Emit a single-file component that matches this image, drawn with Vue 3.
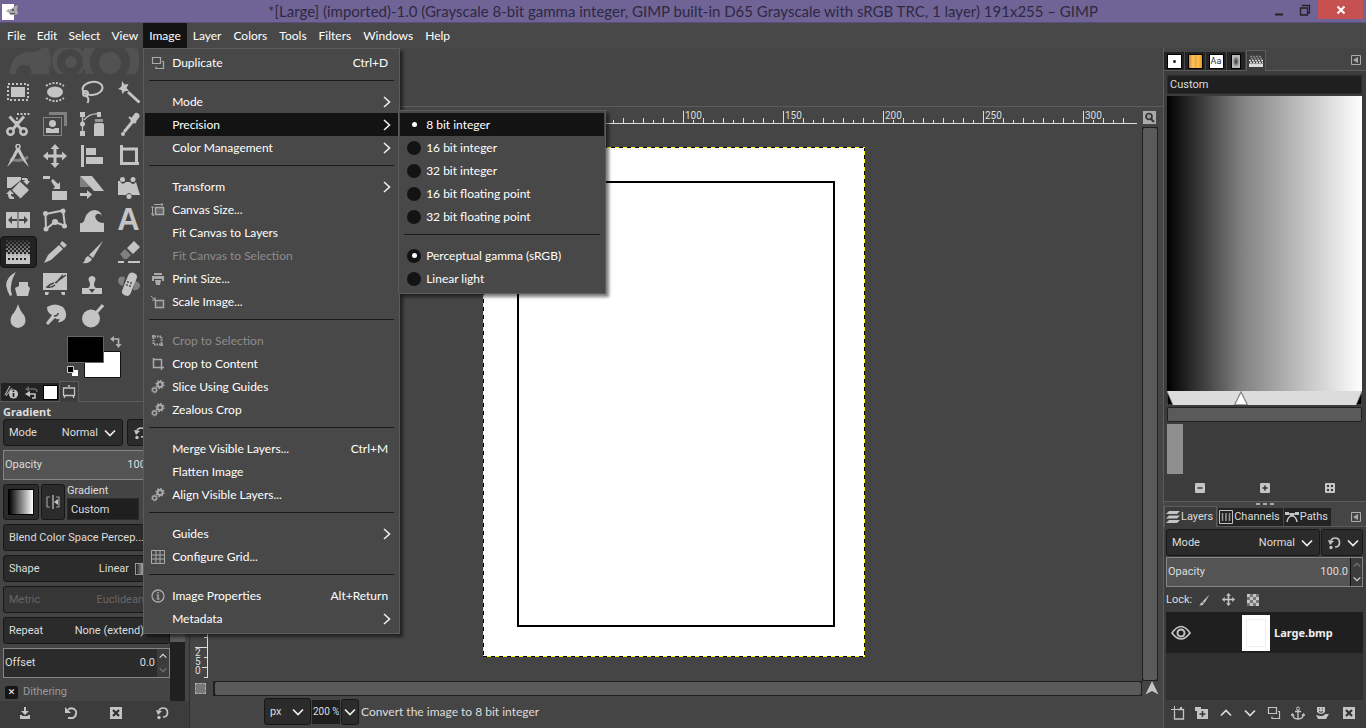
<script setup>
import { ref } from 'vue'

const menus = ['File', 'Edit', 'Select', 'View', 'Image', 'Layer', 'Colors', 'Tools', 'Filters', 'Windows', 'Help']

const imageMenu = [
  { label: 'Duplicate', icon: 'duplicate', key: 'Ctrl+D' },
  { sep: true },
  { label: 'Mode', sub: true },
  { label: 'Precision', sub: true, open: true },
  { label: 'Color Management', sub: true },
  { sep: true },
  { label: 'Transform', sub: true },
  { label: 'Canvas Size...', icon: 'canvas' },
  { label: 'Fit Canvas to Layers' },
  { label: 'Fit Canvas to Selection', off: true },
  { label: 'Print Size...', icon: 'print' },
  { label: 'Scale Image...', icon: 'scaleimg' },
  { sep: true },
  { label: 'Crop to Selection', icon: 'cropsel', off: true },
  { label: 'Crop to Content', icon: 'cropc' },
  { label: 'Slice Using Guides', icon: 'gears' },
  { label: 'Zealous Crop', icon: 'gears' },
  { sep: true },
  { label: 'Merge Visible Layers...', key: 'Ctrl+M' },
  { label: 'Flatten Image' },
  { label: 'Align Visible Layers...', icon: 'gears' },
  { sep: true },
  { label: 'Guides', sub: true },
  { label: 'Configure Grid...', icon: 'grid' },
  { sep: true },
  { label: 'Image Properties', icon: 'info', key: 'Alt+Return' },
  { label: 'Metadata', sub: true },
]

const precisions = ['8 bit integer', '16 bit integer', '32 bit integer', '16 bit floating point', '32 bit floating point']
const gammas = ['Perceptual gamma (sRGB)', 'Linear light']
const precision = ref(precisions[0])
const gamma = ref(gammas[0])
const dithering = ref(true)

const tools = [
  'rect', 'ellipse', 'lasso', 'wand', 'scissors', 'fgselect', 'paths', 'picker',
  'measure', 'move', 'align', 'crop', 'unified', 'scale', 'shear', 'handle',
  'flip', 'cage', 'warp', 'text', 'gradient', 'pencil', 'brush', 'eraser',
  'ink', 'mypaint', 'stamp', 'heal', 'drop', 'smudge', 'dodge',
]

// Ruler marks every 5 image pixels; labels under the open menus are left out.
const ticks = []
for (let i = -27; i <= 64; i++) {
  ticks.push({ pos: i * 10, len: i % 10 === 0 ? 12 : i % 2 === 0 ? 5 : 3, label: i % 10 === 0 && i >= 20 ? String(i * 5) : '' })
}
const vticks = ticks
  .filter(t => t.pos > -20 && t.pos < 531)
  .map(t => ({ ...t, label: t.pos >= 500 ? t.label : '' }))

const checks = []
for (let row = 0; row < 10; row++) {
  for (let col = 0; col < 12; col++) {
    if ((row + col) % 2 === 0) checks.push({ x: col * 2, y: row * 2, o: 0.15 + row * 0.1 })
  }
}
</script>

<template>
  <div class="app">
    <svg class="defs" aria-hidden="true">
      <defs>
        <symbol id="rect" viewBox="0 0 24 24"><rect x="2" y="4" width="20" height="16" fill="none" stroke="currentColor" stroke-width="2" stroke-dasharray="2 2" /><path fill="currentColor" d="M5 7h14v10H5z" /></symbol>
        <symbol id="ellipse" viewBox="0 0 24 24"><ellipse cx="12" cy="12" rx="8" ry="5.500" fill="currentColor" /><path d="M3 6Q12 0 21 6M3 18Q12 24 21 18" fill="none" stroke="currentColor" stroke-width="2" stroke-dasharray="2 1.500" /></symbol>
        <symbol id="lasso" viewBox="0 0 24 24"><g fill="none" stroke="currentColor" stroke-width="2"><ellipse cx="12.500" cy="8.500" rx="10" ry="6.500" transform="rotate(-8 12 8)" /><circle cx="5.500" cy="13.500" r="2.500" /><path d="M6 16Q10 18 7.500 23" /></g></symbol>
        <symbol id="wand" viewBox="0 0 24 24"><path fill="currentColor" d="M5 1l2.500 3.500 4-.5-2 4 2.500 3-4 0-2.500 3-1-4-3.500-1 3.500-2.500z" /><path d="M11 12l11.500 10.500" stroke="currentColor" stroke-width="3" /></symbol>
        <symbol id="scissors" viewBox="0 0 24 24"><g fill="none" stroke="currentColor"><g stroke-width="2.500"><circle cx="4.500" cy="19.500" r="3.200" /><circle cx="17.500" cy="19.500" r="3.200" /><path d="M3.500 4.500L15 17M18 4.500L7 17" stroke-width="3" /></g><path d="M11 2h13M11 5.500v6" stroke-width="2" stroke-dasharray="2 1.500" /></g></symbol>
        <symbol id="fgselect" viewBox="0 0 24 24"><path d="M6 1.500h16.500V14" fill="none" stroke="#808080" stroke-width="3" /><rect x=".5" y="5.500" width="18" height="18" fill="none" stroke="currentColor" stroke-dasharray="1 1" /><circle cx="9.500" cy="11.500" r="3.500" fill="currentColor" /><path fill="currentColor" d="M3 21v-5h4q2.500 2 5 0h4v5z" /></symbol>
        <symbol id="paths" viewBox="0 0 24 24"><path fill="currentColor" d="M0 0h5v5H0zM0 19h5v5H0zM17 0h4v5h-4zM14 13q0-2 2-2h6q2 0 2 2v11H14z" /><circle cx="2.500" cy="12" r="2.500" fill="currentColor" /><path d="M2.500 3v18M4 8Q10 1 18 2" fill="none" stroke="currentColor" stroke-width="1.300" /><path fill="#999" d="M15 7h8v3h-8z" /></symbol>
        <symbol id="picker" viewBox="0 0 24 24"><path d="M7 20L17 8" stroke="currentColor" stroke-width="3" /><path d="M16.500 8l3-4" stroke="currentColor" stroke-width="6" stroke-linecap="round" /><path d="M12 5l7 6" stroke="currentColor" stroke-width="2" /><circle cx="6" cy="22" r="2" fill="currentColor" /></symbol>
        <symbol id="measure" viewBox="0 0 24 24"><path d="M4 15q9 4 18-2" fill="none" stroke="#808080" stroke-width="3" /><circle cx="12" cy="2.500" r="2" fill="none" stroke="currentColor" stroke-width="1.500" /><path fill="currentColor" d="M10 5L1 23q6-5 11-15 5 10 11 15L14 5z" /></symbol>
        <symbol id="move" viewBox="0 0 24 24"><path fill="currentColor" d="M12 0l4.500 5h-3v5.500H19v-3l5 4.500-5 4.500v-3h-5.500V19h3L12 24l-4.500-5h3v-5.500H5v3L0 12l5-4.500v3h5.500V5h-3z" /></symbol>
        <symbol id="align" viewBox="0 0 24 24"><path fill="currentColor" d="M1 1h3v22H1zM6 4h10v7H6zM6 13h17v7H6z" /></symbol>
        <symbol id="crop" viewBox="0 0 24 24"><path d="M4.500 4v15.500H19.500V5H4" fill="none" stroke="currentColor" stroke-width="3" /><path fill="currentColor" d="M3 1h3v3H3zM20 18h2v3h-2z" /></symbol>
        <symbol id="unified" viewBox="0 0 24 24"><path fill="currentColor" d="M1 1h14v3L5 12H1zM14 5.500l9 8.500-8.500 8.500L6 14zM16 2h4q2 0 2 3h2l-3 4-4-4h2q0-1-1-1h-2zM0 18l4-4 4 4H5q0 3 3 3v2H5q-3 0-3-5z" /></symbol>
        <symbol id="scale" viewBox="0 0 24 24"><path fill="currentColor" d="M0 0h7v3H0zM9 15h15v9H9zM8 5l2-2 5 5 2-2v7h-7l2-2z" /></symbol>
        <symbol id="shear" viewBox="0 0 24 24"><path fill="#808080" d="M0 0v11h10z" /><path fill="currentColor" d="M0 0h12l12 15H14zM0 17h7v-3l5 4.500-5 4.500v-3H0z" /></symbol>
        <symbol id="handle" viewBox="0 0 24 24"><path fill="currentColor" d="M1 5l2 0q2 5 6 1h4q3 4 6 0l4 13h-8q-3-4-6 0H1z" /><g fill="currentColor"><circle cx="5.500" cy="3.500" r="2.500" /><circle cx="16" cy="3.500" r="2.500" /><circle cx="12" cy="20.500" r="2.500" /></g></symbol>
        <symbol id="flip" viewBox="0 0 24 24"><path fill="currentColor" d="M0 4h11.500v16H0zM12.500 4H24v16H12.500z" /><path fill="#454545" d="M2 12l4-4v3h5v2H6v3zM22 12l-4-4v3h-5v2h5v3z" /></symbol>
        <symbol id="cage" viewBox="0 0 24 24"><path d="M2.500 6L20 2.500 22 18 12 14 3 21z" fill="none" stroke="currentColor" stroke-width="2" /><g fill="currentColor"><circle cx="2.500" cy="5.500" r="2.500" /><circle cx="20" cy="3" r="2.500" /><circle cx="21.500" cy="18" r="2.500" /><circle cx="12" cy="14" r="3" /><circle cx="3" cy="21" r="2.500" /></g></symbol>
        <symbol id="warp" viewBox="0 0 24 24"><path fill="currentColor" d="M0 24v-9q4 1 5-5Q8 2 15 2q6 1 7 6-2-3-5-2-3 2-1 5 2 4 8 4v9z" /></symbol>
        <symbol id="pencil" viewBox="0 0 24 24"><path fill="currentColor" d="M1 23l4-8L16 5l4 4L8 20zM17 4l2-3 5 4-3 3z" /></symbol>
        <symbol id="brush" viewBox="0 0 24 24"><path fill="currentColor" d="M23 1L13 18l-4-3zM8 16l4 3q-2 5-10 4 3-1 3-4 1-2 3-3z" /></symbol>
        <symbol id="eraser" viewBox="0 0 24 24"><path fill="currentColor" d="M10 8l7-7 6 6-7 7zM1 21h6v2H1zM11 21h12v2H11z" /><path fill="#808080" d="M3 14l5-5 6 6-4 4H7z" /></symbol>
        <symbol id="ink" viewBox="0 0 24 24"><path fill="currentColor" d="M10 0Q1 4 0 13q1 6 4 11l2-1q-2-5-1-9Q6 6 10 0zM13 10h9v4l2 2-2 8H11L9 16l4-2z" /></symbol>
        <symbol id="mypaint" viewBox="0 0 24 24"><path fill="currentColor" d="M0 1h24v17H0zM2 20h4l-1 3H2zM18 20h4v3h-3z" /><path d="M23 3L12 11M20 3l-7 8M11 11q-4 1-7 4 5 1 8-2" stroke="#454545" stroke-width="1.500" fill="none" /></symbol>
        <symbol id="stamp" viewBox="0 0 24 24"><path fill="currentColor" d="M2 22v-6h6q3-2 1.500-6-2-3 0-5 2.500-2 5 0 2 2 0 5-1.500 4 1.500 6h6v6z" /><path fill="#454545" d="M9 17h6l-3 4z" /></symbol>
        <symbol id="heal" viewBox="0 0 24 24"><path fill="#808080" d="M1 8q1-5 7-3l-2 9Q1 13 1 8zM16 18l2-9q5 1 5 5-1 5-7 4z" /><rect x="8" y="0" width="9" height="24" rx="4" transform="rotate(22 12 12)" fill="currentColor" /><g fill="#454545"><circle cx="11" cy="10" r=".9" /><circle cx="14" cy="11" r=".9" /><circle cx="10" cy="13" r=".9" /><circle cx="13" cy="14" r=".9" /></g></symbol>
        <symbol id="drop" viewBox="0 0 24 24"><path fill="currentColor" d="M12 0q2 7 6 11 3 6 0 10-6 6-12 0-3-4 0-10 4-4 6-11z" /></symbol>
        <symbol id="smudge" viewBox="0 0 24 24"><path fill="currentColor" d="M4 3q8-5 16 0 5 6 2 12-3 4-7 3l2-3q-3 1-5-1L5 21l-2-2 6-8q-5-2-5-8z" /><path d="M11 12q4 0 4-3" stroke="#454545" stroke-width="1.500" fill="none" /></symbol>
        <symbol id="dodge" viewBox="0 0 24 24"><circle cx="11" cy="14.500" r="9" fill="currentColor" /><path d="M16 9l7-8" stroke="currentColor" stroke-width="3" /></symbol>
        <symbol id="duplicate" viewBox="0 0 14 14"><path d="M1.500 1.500h8v6h-8zM5 10.500v2h7.500v-7H11" fill="none" stroke="currentColor" stroke-width="1.200" /></symbol>
        <symbol id="canvas" viewBox="0 0 14 14"><path d="M3 1.500h9M1.500 4v8M1.500 12.500H3" fill="none" stroke="currentColor" /><rect x="4.500" y="4.500" width="8" height="7" fill="#666" stroke="currentColor" stroke-width="1.500" /><path d="M11 0v3M0 11h3M0 4h3" stroke="currentColor" /></symbol>
        <symbol id="print" viewBox="0 0 14 14"><path fill="currentColor" d="M3 1h8v2H3zM1 4h12v5h-2V7H3v2H1zM4 8h6l-1 5H5z" /></symbol>
        <symbol id="scaleimg" viewBox="0 0 14 14"><path d="M0 1l4 4M4 2v3H1" stroke="currentColor" fill="none" /><rect x="4.500" y="5.500" width="8" height="7" fill="#555" stroke="currentColor" stroke-width="1.500" /></symbol>
        <symbol id="cropsel" viewBox="0 0 14 14"><path d="M2.500 1v9.500H12M1 2.500h9.500V13" fill="none" stroke="currentColor" stroke-width="2" stroke-dasharray="1.500 1" /></symbol>
        <symbol id="cropc" viewBox="0 0 14 14"><path d="M2.500 1v9.500H13M2 2.500h8.500V13" fill="none" stroke="currentColor" stroke-width="1.500" /></symbol>
        <symbol id="gears" viewBox="0 0 14 14"><g fill="none" stroke="currentColor"><circle cx="9" cy="4.500" r="2.500" stroke-width="2" /><circle cx="9" cy="4.500" r="4" stroke-width="1.300" stroke-dasharray="1.600 1.500" /><circle cx="3.500" cy="10" r="2" stroke-width="1.300" /><circle cx="3.500" cy="10" r="3" stroke-dasharray="1 1.300" /></g></symbol>
        <symbol id="grid" viewBox="0 0 14 14"><path d="M.5.500h13v13H.500zM.500 5h13M.500 9h13M5 .500v13M9 .500v13" fill="none" stroke="currentColor" /></symbol>
        <symbol id="info" viewBox="0 0 14 14"><circle cx="7" cy="7" r="6" fill="none" stroke="currentColor" stroke-width="1.300" /><path fill="currentColor" d="M6.300 3h1.500v1.500H6.300zM5.500 5.500h2.300v4h1v1h-3.300v-1h.8v-3h-.8z" /></symbol>
        <symbol id="right" viewBox="0 0 8 12"><path d="M1 1l5.500 5L1 11" fill="none" stroke="#eee" stroke-width="1.600" /></symbol>
        <symbol id="down" viewBox="0 0 12 12"><path d="M1 3.500l5 5 5-5" fill="none" stroke="#eee" stroke-width="1.700" /></symbol>
        <symbol id="up" viewBox="0 0 12 12"><path d="M1 8.500l5-5 5 5" fill="none" stroke="currentColor" stroke-width="1.700" /></symbol>
        <symbol id="reset" viewBox="0 0 14 14"><path d="M4 4.500Q5 2 8 2q4.500 0 4.500 4.500T8 11" fill="none" stroke="currentColor" stroke-width="1.700" /><path fill="currentColor" d="M1 4l6 1-4 4z" /><circle cx="4" cy="11.500" r="1.700" fill="currentColor" /></symbol>
        <symbol id="undo" viewBox="0 0 14 14"><path d="M4 3.500q5-3 8 1.500 1 5-3 7H4" fill="none" stroke="currentColor" stroke-width="1.800" /><path fill="currentColor" d="M1 1v6h6z" /></symbol>
        <symbol id="save" viewBox="0 0 14 14"><path fill="currentColor" d="M6 1h2v4h3L7 9 3 5h3zM2 9h2v1h6V9h2v4H2z" /></symbol>
        <symbol id="delete" viewBox="0 0 14 14"><path fill="currentColor" d="M1 1h12v12H1z" /><path d="M4 4l6 6M10 4l-6 6" stroke="#303030" stroke-width="2.200" /></symbol>
        <symbol id="collapse" viewBox="0 0 10 10"><path d="M.5.500h9v9h-9z" fill="none" stroke="currentColor" /><path fill="currentColor" d="M7 2v6L2 5z" /></symbol>
        <symbol id="halftone" viewBox="0 0 14 12"><path d="M1 1.500h12M2 3.500h12" stroke="#888" stroke-width="1.500" stroke-dasharray="2 1" /><path d="M0 5.500h14M1 7.500h13" stroke="currentColor" stroke-width="1.700" stroke-dasharray="2 1" /><path fill="currentColor" d="M0 8.500h14V12H0z" /></symbol>
        <symbol id="layers" viewBox="0 0 14 14"><path fill="currentColor" d="M3 1h11l-3 3H0zM3 5.500h11l-3 3H0zM3 10h11l-3 3H0z" /></symbol>
        <symbol id="channels" viewBox="0 0 14 14"><path d="M.5.500h13v13H.500z" fill="#222" stroke="currentColor" /><path d="M3.500 3v8M7 3v8M10.500 3v8" stroke="#999" stroke-width="1.500" /></symbol>
        <symbol id="pathtab" viewBox="0 0 14 12"><path fill="currentColor" d="M0 1h4v3H0zM10 1h4v3h-4zM5 2h4v3H5z" /><path d="M2 3h10M2 11q1-6 5-6t5 6" fill="none" stroke="currentColor" stroke-width="1.500" /></symbol>
        <symbol id="checker" viewBox="0 0 12 12"><path fill="#777" d="M0 0h12v12H0z" /><path fill="currentColor" d="M0 0h3v3H0zM6 0h3v3H6zM3 3h3v3H3zM9 3h3v3H9zM0 6h3v3H0zM6 6h3v3H6zM3 9h3v3H3zM9 9h3v3H9z" /></symbol>
        <symbol id="newlayer" viewBox="0 0 14 14"><path d="M3.500 6v7h9V3.500H7" fill="none" stroke="currentColor" stroke-width="1.300" /><path d="M3.500 0v7M0 3.500h7" stroke="currentColor" /><path fill="currentColor" d="M9 1h2v3H9z" /></symbol>
        <symbol id="group" viewBox="0 0 14 14"><path fill="currentColor" d="M0 1h6v2h7v10H2V5H0z" /><path d="M7.500 5v6M4.500 8h6" stroke="#383838" stroke-width="1.500" /></symbol>
        <symbol id="anchor" viewBox="0 0 14 14"><circle cx="7" cy="2.500" r="1.500" fill="none" stroke="currentColor" /><path d="M7 4v9M4 5.500h6M1.500 8q0 5 5.500 5t5.500-5M0 9.500L1.500 8 3 10M11 10l1.500-2L14 9.500" fill="none" stroke="currentColor" stroke-width="1.300" /></symbol>
        <symbol id="mask" viewBox="0 0 14 14"><path fill="currentColor" d="M2 1h8v5q-4 4-8 0zM1 9l4 1q4 0 5-2h4l-3 5H3z" /><path d="M4 3h1M7 3h1M4 5.500q2 1.500 4 0" stroke="#333" fill="none" /></symbol>
        <symbol id="toolopt" viewBox="0 0 14 14"><path d="M1.500 3h11v7.500h-11zM6 1h2M3 11l-1 2M11 11l1 2" fill="none" stroke="currentColor" stroke-width="1.300" /></symbol>
        <symbol id="device" viewBox="0 0 14 14"><path d="M1 10L6 1M2 11L8 3" stroke="#aaa" stroke-width="1.200" /><circle cx="9.500" cy="9" r="4.500" fill="currentColor" /><path d="M9.500 8v4M9.500 5.500v1.500" stroke="#222" stroke-width="1.700" /></symbol>
        <symbol id="history" viewBox="0 0 14 14"><path d="M3 4h7q3 0 3 3" fill="none" stroke="#666" stroke-width="1.500" /><path fill="#666" d="M5 1v6L1 4z" /><path d="M3 9h8v4H8" fill="none" stroke="currentColor" stroke-width="1.500" /><path fill="currentColor" d="M6 6v6L1 9z" /></symbol>
        <symbol id="eye" viewBox="0 0 20 16"><path d="M1 8Q10-5 19 8 10 20 1 8z" fill="none" stroke="currentColor" stroke-width="1.700" /><circle cx="10" cy="8" r="3.500" fill="none" stroke="currentColor" stroke-width="2" /></symbol>
        <symbol id="flipgrad" viewBox="0 0 14 14"><path d="M4 2H1v10h3M10 2h3v10h-3" fill="none" stroke="#999" stroke-width="1.200" /><path d="M7 0v14" stroke="#aaa" stroke-width="1.500" /><path fill="currentColor" d="M12 4v6L8 7z" /></symbol>
        <symbol id="swap" viewBox="0 0 12 12"><path d="M4 3h4.500v6" fill="none" stroke="currentColor" stroke-width="1.700" /><path fill="currentColor" d="M0 3l4-3v6zM5.500 8h6l-3 4z" /></symbol>
        <symbol id="zoomout" viewBox="0 0 10 10"><rect width="10" height="10" rx="1" fill="currentColor" /><path d="M2.500 5h5" stroke="#333" stroke-width="1.500" /></symbol>
        <symbol id="zoomin" viewBox="0 0 10 10"><rect width="10" height="10" rx="1" fill="currentColor" /><path d="M2.500 5h5M5 2.500v5" stroke="#333" stroke-width="1.500" /></symbol>
        <symbol id="zoomfit" viewBox="0 0 10 10"><rect width="10" height="10" rx="1" fill="currentColor" /><path fill="#333" d="M2 2h2v2H2zM6 2h2v2H6zM2 6h2v2H2zM6 6h2v2H6z" /></symbol>
      </defs>
    </svg>

    <header class="title">
      <svg class="wilber" viewBox="0 0 17 17" width="17" height="17"><path fill="#fff" d="M0 1h12v16H0z" /><path fill="#aaa" d="M4 8q2-2 5-2 3-3 7-4l-1 4 1 5-4 1q-4 1-5-2z" /><path fill="#555" d="M10 6h2v2h-2zM8 10h5v1H8z" /></svg>
      <h1>*[Large] (imported)-1.0 (Grayscale 8-bit gamma integer, GIMP built-in D65 Grayscale with sRGB TRC, 1 layer) 191x255 – GIMP</h1>
      <div class="winbtns">
        <button aria-label="Minimize"><svg viewBox="0 0 12 14" width="12" height="14"><path d="M2 11.500h8" stroke="#222" stroke-width="2" /></svg></button>
        <button aria-label="Restore"><svg viewBox="0 0 12 14" width="12" height="14"><path d="M1.500 5h7v7h-7zM3.500 3V2.500h7V10H9" fill="none" stroke="#222" stroke-width="1.300" /></svg></button>
        <button class="close" aria-label="Close"><svg viewBox="0 0 10 10" width="10" height="10"><path d="M1.500 1.500l7 7M8.500 1.500l-7 7" stroke="#fff" stroke-width="2" /></svg></button>
      </div>
    </header>

    <nav class="menubar">
      <div v-for="m in menus" :key="m" class="slot">
        <button :class="{ active: m === 'Image' }">{{ m }}</button>
        <div v-if="m === 'Image'" class="menu main-menu">
          <template v-for="(it, i) in imageMenu" :key="i">
            <hr v-if="it.sep">
            <div v-else class="slot">
              <button class="item" :class="{ hot: it.open }" :disabled="it.off">
                <svg v-if="it.icon" class="mi"><use :href="'#' + it.icon" /></svg><span v-else class="mi"></span>
                <span class="lbl">{{ it.label }}</span>
                <span v-if="it.key">{{ it.key }}</span>
                <svg v-if="it.sub" class="arr"><use href="#right" /></svg>
              </button>
              <div v-if="it.open" class="menu submenu">
                <label v-for="p in precisions" :key="p" class="item" :class="{ hot: p === precision }"><input v-model="precision" type="radio" name="precision" :value="p"><span>{{ p }}</span></label>
                <hr>
                <label v-for="g in gammas" :key="g" class="item"><input v-model="gamma" type="radio" name="gamma" :value="g"><span>{{ g }}</span></label>
              </div>
            </div>
          </template>
        </div>
      </div>
    </nav>

    <main class="work">
      <aside class="left">
        <svg class="banner" width="186" height="26" viewBox="0 0 186 26"><g fill="#525252"><path d="M9 26Q12 4 30 4q8 0 12-4h7v26H31q2-9-7-9-8 0-8 9z" /><circle cx="69" cy="13" r="20" /><circle cx="109" cy="14" r="26" /></g><path d="M51 0h38v26H51z" fill="#454545" /><g fill="#525252"><circle cx="69" cy="13" r="17" /></g><circle cx="70" cy="14" r="13" fill="#454545" /><circle cx="71" cy="14" r="6" fill="#525252" /><path d="M84 0q-4 12 2 26h50q6-14 1-26z" fill="#525252" /><circle cx="110" cy="14" r="20" fill="#454545" /><circle cx="110" cy="15" r="11" fill="#525252" /></svg>
        <div class="tools">
          <button v-for="t in tools" :key="t" :class="{ picked: t === 'gradient' }" :aria-label="t">
            <svg v-if="t === 'gradient'" viewBox="0 0 24 24" shape-rendering="crispEdges"><rect v-for="(c, i) in checks" :key="i" :x="c.x" :y="c.y" width="2" height="2" fill="#c4c4c4" :opacity="c.o" /><path d="M0 14h2v2h2v-2h2v2h2v-2h2v2h2v-2h2v2h2v-2h2v2h2v-2h2v2h2v8H0z" fill="#c4c4c4" /><path d="M2 18h2v2H2zM6 18h2v2H6zM10 18h2v2h-2zM14 18h2v2h-2zM18 18h2v2h-2z" fill="#222" /></svg>
            <span v-else-if="t === 'text'" class="glyph">A</span>
            <svg v-else><use :href="'#' + t" /></svg>
          </button>
        </div>
        <div class="colors">
          <svg width="56" height="44" viewBox="0 0 56 44"><path d="M17.500 15.500h36v26h-36z" fill="#fff" stroke="#111" /><path d="M.5.500h36v26H.500z" fill="#000" stroke="#666" /><path d="M5 34h6v6H5z" fill="#fff" /><path d="M.500 30.500h6v6h-6z" fill="#000" stroke="#ccc" /><svg x="43" y="0" width="12" height="12"><use href="#swap" /></svg></svg>
        </div>
        <div class="tabs ltabs">
          <button aria-label="Device status"><svg class="ic"><use href="#device" /></svg></button>
          <button aria-label="Undo history"><svg class="ic"><use href="#history" /></svg></button>
          <button class="slim" aria-label="Images"><i class="thumb"></i></button>
          <button class="on" aria-label="Tool options"><svg class="ic"><use href="#toolopt" /></svg></button>
        </div>
        <section class="options">
          <div class="optcol">
            <h2>Gradient</h2>
            <div class="row first">
              <label class="combo"><span>Mode</span><select><option>Normal</option></select><svg class="ch"><use href="#down" /></svg></label>
              <button class="combo" aria-label="Reset mode"><svg class="ic"><use href="#reset" /></svg></button>
            </div>
            <label class="spin filled"><span>Opacity</span><input value="100.0"><span class="arrows"><svg class="dim"><use href="#up" /></svg><svg class="flipv"><use href="#up" /></svg></span></label>
            <div class="row gradrow">
              <button class="combo gsw" aria-label="Gradient"><i></i></button>
              <button class="combo gflip" aria-label="Reverse"><svg class="ic"><use href="#flipgrad" /></svg></button>
              <label class="gname"><span>Gradient</span><input value="Custom"></label>
            </div>
            <label class="combo"><select class="wide" aria-label="Blend color space"><option>Blend Color Space Percep...</option></select></label>
            <label class="combo shape"><span>Shape</span><select><option>Linear</option></select><i class="lin"></i></label>
            <label class="combo off shape"><span>Metric</span><select disabled><option>Euclidean</option></select></label>
            <label class="combo shape"><span>Repeat</span><select><option>None (extend)</option></select></label>
            <label class="spin dark"><span>Offset</span><input value="0.0"><span class="arrows"><svg><use href="#up" /></svg><svg class="dim flipv"><use href="#up" /></svg></span></label>
            <label class="tick"><input v-model="dithering" type="checkbox"><span>Dithering</span></label>
          </div>
          <div class="lscroll"><i></i></div>
        </section>
        <footer class="actions">
          <button v-for="a in ['save', 'undo', 'delete', 'reset']" :key="a" :aria-label="a"><svg class="ic"><use :href="'#' + a" /></svg></button>
        </footer>
      </aside>

      <section class="center">
        <div class="corner"></div>
        <svg class="hruler"><g transform="translate(275 0)"><g v-for="t in ticks" :key="t.pos"><path :d="`M${t.pos}.5 ${16 - t.len}v${t.len}`" stroke="#ddd" /><text v-if="t.label" :x="t.pos + 2" y="12">{{ t.label }}</text></g></g><path d="M0 16.500h929" stroke="#ddd" /></svg>
        <div class="zoomcell"><svg width="13" height="13" viewBox="0 0 13 13"><path fill="#aaa" d="M0 0h13v13H0z" /><circle cx="6" cy="5.500" r="3" fill="#999" stroke="#333" stroke-width="1.700" /><path d="M8 8l3 3" stroke="#333" stroke-width="2" /></svg></div>
        <svg class="vruler"><g transform="translate(0 20)"><g v-for="t in vticks" :key="t.pos"><path :d="`M${17 - t.len} ${t.pos}.5h${t.len}`" stroke="#ddd" /><text v-for="(ch, k) in t.label" :key="k" x="5" :y="t.pos + 9 + k * 9">{{ ch }}</text></g></g><path d="M17.500 0v551" stroke="#ddd" /></svg>
        <div class="view"><div class="page"><div class="inner"></div></div></div>
        <div class="vscroll"><i></i></div>
        <div class="qmask"><i></i></div>
        <div class="hscroll"><i></i></div>
        <div class="nav"><svg width="14" height="14" viewBox="0 0 14 14"><path fill="#c4c4c4" d="M7 0l6.500 13.500L7 10 .5 13.500z" /></svg></div>
        <div class="status">
          <label class="combo unit"><select aria-label="Unit"><option>px</option></select><svg class="ch"><use href="#down" /></svg></label>
          <input class="zoomval" aria-label="Zoom" value="200 %">
          <button class="combo zbtn" aria-label="Zoom levels"><svg class="ch"><use href="#down" /></svg></button>
          <span>Convert the image to 8 bit integer</span>
        </div>
      </section>

      <aside class="right">
        <div class="tabs rtabs">
          <button aria-label="Brushes"><i class="thumb b1"></i></button>
          <button aria-label="Patterns"><i class="thumb b2"></i></button>
          <button aria-label="Fonts"><i class="thumb">Aa</i></button>
          <button class="slim" aria-label="Document history"><i class="thumb b4"></i></button>
          <button class="on" aria-label="Gradients"><svg width="14" height="12"><use href="#halftone" /></svg></button>
          <button class="coll" aria-label="Configure tab"><svg width="10" height="10"><use href="#collapse" /></svg></button>
        </div>
        <section class="gpanel">
          <input class="entry" aria-label="Gradient name" value="Custom">
          <div class="gview"></div>
          <svg class="gslide" viewBox="0 0 195 14" preserveAspectRatio="none"><path fill="#dcdcdc" d="M0 0h195v14H0z" /><path fill="#000" stroke="#999" stroke-width=".7" d="M0 0l6 14H0zM195 0l-6 14h6z" /><path fill="#fff" stroke="#888" stroke-width="1.300" d="M74 1l6.500 13h-13z" /></svg>
          <div class="gscroll"></div>
          <div class="swatch"></div>
          <div class="zooms"><button v-for="z in ['zoomout', 'zoomin', 'zoomfit']" :key="z" :aria-label="z"><svg width="10" height="10"><use :href="'#' + z" /></svg></button></div>
        </section>
        <div class="grip"><i></i><i></i><i></i></div>
        <div class="tabs ltb">
          <button class="on"><svg class="ic"><use href="#layers" /></svg>Layers</button>
          <button><svg class="ic"><use href="#channels" /></svg>Channels</button>
          <button><svg class="ic"><use href="#pathtab" /></svg>Paths</button>
          <button class="coll" aria-label="Configure tab"><svg width="10" height="10"><use href="#collapse" /></svg></button>
        </div>
        <section class="lpanel">
          <div class="row">
            <label class="combo"><span>Mode</span><select><option>Normal</option></select><svg class="ch"><use href="#down" /></svg></label>
            <button class="combo rs" aria-label="Reset mode"><svg class="ic"><use href="#reset" /></svg><svg class="ch"><use href="#down" /></svg></button>
          </div>
          <label class="spin filled"><span>Opacity</span><input value="100.0"><span class="arrows"><svg class="dim"><use href="#up" /></svg><svg class="flipv"><use href="#up" /></svg></span></label>
          <div class="lock"><span>Lock:</span><button aria-label="Lock pixels"><svg width="12" height="12"><use href="#brush" /></svg></button><button aria-label="Lock position"><svg width="13" height="13"><use href="#move" /></svg></button><button aria-label="Lock alpha"><svg width="12" height="12"><use href="#checker" /></svg></button></div>
          <div class="list"><div class="layer"><svg width="20" height="16"><use href="#eye" /></svg><i class="lthumb"><b></b></i><strong>Large.bmp</strong></div></div>
          <footer class="lact">
            <button aria-label="New layer"><svg class="ic"><use href="#newlayer" /></svg></button>
            <button aria-label="New group"><svg class="ic"><use href="#group" /></svg></button>
            <button aria-label="Raise"><svg class="ch"><use href="#up" /></svg></button>
            <button aria-label="Lower"><svg class="ch flipv"><use href="#up" /></svg></button>
            <button aria-label="Duplicate"><svg class="ic"><use href="#duplicate" /></svg></button>
            <button aria-label="Anchor"><svg class="ic"><use href="#anchor" /></svg></button>
            <button aria-label="Mask"><svg class="ic"><use href="#mask" /></svg></button>
            <button aria-label="Delete"><svg class="ic"><use href="#delete" /></svg></button>
          </footer>
        </section>
      </aside>
    </main>
  </div>
</template>

<style>
html, body { margin: 0; background: #454545; }
</style>

<style scoped>
* { box-sizing: border-box; }
.app { height: 100vh; display: flex; flex-direction: column; overflow: hidden; color: #ddd; background: #454545; font: 11px/14px Roboto, "Noto Sans", sans-serif; }
.defs { position: absolute; width: 0; height: 0; }
button, input, select { font: inherit; color: inherit; background: none; border: 0; padding: 0; margin: 0; min-width: 0; }
select { appearance: none; opacity: 1; }
svg { display: block; flex: none; }
i { display: block; font-style: normal; }
.ic { width: 14px; height: 14px; color: #c4c4c4; }
.ch { width: 12px; height: 12px; color: #ddd; }
.flipv { transform: scaleY(-1); }

.title { height: 23px; flex: none; display: flex; align-items: center; background: #706497; border-bottom: 1px solid #5a5080; }
.title h1 { flex: 1; margin: 0 0 0 81px; text-align: center; white-space: nowrap; font: 15px/22px Lato, "Open Sans", sans-serif; color: #2d2940; }
.wilber { margin-left: 2px; }
.winbtns { display: flex; align-self: flex-start; padding-right: 3px; }
.winbtns button { width: 26px; height: 19px; display: grid; place-items: center; }
.winbtns .close { width: 45px; background: #c75050; }

.menubar { height: 25px; flex: none; display: flex; padding-left: 1px; background: #484848; font: 12px/16px Lato, "Open Sans", sans-serif; color: #fff; }
.slot { position: relative; }
.menubar > .slot > button { height: 25px; padding: 0 6px; }
.menubar > .slot:nth-child(-n+4) > button { padding-right: 5px; }
.menubar > .slot > .active { background: #131313; }
.menu { position: absolute; z-index: 5; padding: 2px 1px 3px; background: #484848; border: 1px solid #5c5c5c; box-shadow: 3px 3px 3px rgba(0, 0, 0, .5); }
.main-menu { top: 25px; left: 0; width: 257px; }
.submenu { top: -3px; left: 253px; width: 208px; }
.menu hr { height: 1px; margin: 6px 4px 9px; border: 0; background: #1a1a1a; }
.item { width: 100%; height: 23px; display: flex; align-items: center; padding: 0 10px 0 6px; text-align: left; white-space: nowrap; }
.item.hot { background: #131313; }
.item:disabled { color: #8c8c8c; }
.mi { width: 14px; height: 14px; margin-right: 7px; color: #aaa; }
.lbl { flex: 1; }
.arr { width: 8px; height: 12px; margin-right: -3px; }
.item input { appearance: none; width: 14px; height: 14px; margin-right: 5px; border-radius: 7px; background: #131313; display: grid; place-items: center; }
.submenu .item { padding-left: 7px; }
.item input:checked::after { content: ""; width: 5px; height: 5px; border-radius: 3px; background: #fff; }

.work { flex: 1; min-height: 0; display: flex; }
.left { width: 190px; flex: none; display: flex; flex-direction: column; border-right: 1px solid #303030; }
.tools { margin-top: 2px; display: grid; grid-template-columns: repeat(4, 37px); grid-auto-rows: 32px; }
.tools button { display: grid; place-items: center; padding-right: 2px; color: #c4c4c4; border-radius: 4px; border: 1px solid transparent; }
.tools svg { width: 24px; height: 24px; }
.tools .picked { background: #222; border-color: #161616; }
.glyph { font: bold 31px/24px "Liberation Sans", sans-serif; }
.colors { height: 50px; padding: 4px 0 0 67px; flex: none; color: #b0b0b0; }
.tabs { display: flex; align-items: flex-end; flex: none; height: 22px; border-bottom: 1px solid #5c5c5c; }
.tabs button { height: 18px; width: 20px; margin-right: 1px; display: flex; align-items: center; justify-content: center; background: #232323; }
.tabs .slim { width: 18px; }
.tabs .on { height: 21px; margin-bottom: -1px; background: #3c3c3c; border: 1px solid #5c5c5c; border-bottom: 0; }
.tabs .coll { margin: 0 4px 0 auto; background: none; color: #aaa; width: 12px; }
.ltabs { height: 20px; padding-left: 1px; }
.ltabs button { margin-right: 0; }
.thumb { width: 15px; height: 15px; background: #fff; border: 1px solid #000; color: #333; font-size: 9px; line-height: 13px; }
.b1 { background: radial-gradient(#333 1px, #fff 2px); }
.b2 { background: linear-gradient(90deg, #d08030, #ffc860 30%, #f0a840 50%, #ffc04c 70%, #e09830); }
.b4 { width: 10px; background: radial-gradient(#333, #bbb 60%); }
.options { flex: 1; min-height: 0; display: flex; background: #444; padding-left: 2px; margin-right: 4px; overflow: hidden; }
.optcol { width: 168px; display: flex; flex-direction: column; gap: 4px; padding-left: 1px; }
.optcol h2 { font: bold 11px/16px "Noto Sans", sans-serif; margin: 2px 0 -5px; }
.row { display: flex; gap: 4px; }
.combo { height: 27px; display: flex; align-items: center; gap: 6px; flex: none; padding: 0 6px 0 5px; background: #2b2b2b; border: 1px solid #171717; border-radius: 3px; }
.combo select { flex: 1; text-align-last: right; }
.combo select.wide { text-align-last: left; }
.row .combo:first-child:not(.gsw) { width: 120px; }
.row .combo:nth-child(2) { flex: 1; }
.combo.off { background: #363636; color: #666; }
.shape { padding-right: 25px; }
.shape .lin { width: 11px; height: 12px; margin-right: -2px; border: 1px solid #999; background: linear-gradient(90deg, #222, #ccc); }
.spin { height: 30px; flex: none; display: flex; align-items: center; border: 1px solid #858585; padding-left: 1px; background: #2b2b2b; }
.spin input { flex: 1; width: 40px; text-align: right; padding-right: 2px; }
.filled { background: #545454; }
.arrows { width: 12px; align-self: stretch; flex: none; display: flex; flex-direction: column; justify-content: space-around; align-items: center; background: #3c3c3c; color: #ddd; }
.arrows svg { width: 8px; height: 8px; }
.arrows .dim { color: #777; }
.gradrow { height: 36px; gap: 2px; }
.combo.gsw { width: 36px; height: 36px; padding: 4px; }
.gsw i { width: 26px; height: 26px; border: 1px solid #000; background: linear-gradient(90deg, #000, #fff); }
.row .combo.gflip { height: 36px; width: 24px; flex: none; padding: 0 4px; }
.gname { width: 72px; display: flex; flex-direction: column; }
.gname input { height: 22px; padding: 0 3px; background: #1f1f1f; border: 1px solid #2b2b2b; }
.tick { display: flex; align-items: center; gap: 5px; padding: 3px 0 0 2px; color: #999; }
.tick input { appearance: none; width: 13px; height: 13px; border-radius: 2px; background: #161616; display: grid; place-items: center; }
.tick input:checked::after { content: "✕"; color: #fff; font: bold 9px/10px "DejaVu Sans", sans-serif; }
.lscroll { width: 15px; background: #202020; }
.lscroll i { height: 240px; background: #5a5a5a; }
.actions { height: 27px; flex: none; display: flex; background: #3c3c3c; padding: 0 4px 3px 2px; }
.actions button { flex: 1; display: grid; place-items: center; }

.center { flex: 1; min-width: 0; display: grid; grid-template-columns: 18px 5px 1fr 16px 5px; grid-template-rows: 20px 1fr 15px 32px; border-top: 1px solid #5c5c5c; margin-top: 58px; }
.corner { grid-area: 1 / 1; }
.hruler { grid-area: 1 / 2 / 2 / 4; width: 100%; height: 20px; }
.hruler text, .vruler text { fill: #ddd; font: 10px Roboto, sans-serif; }
.zoomcell { grid-area: 1 / 4; padding: 4px 0 0 1px; }
.vruler { grid-area: 2 / 1; width: 18px; height: 100%; }
.view { grid-area: 2 / 2 / 3 / 4; display: flex; align-items: center; justify-content: center; min-height: 0; padding: 0 2px 4px 0; }
.page {
  width: 382px; height: 510px; padding: 34px 30px 30px 34px; background:
    repeating-linear-gradient(90deg, #000 0 4px, #ff0 4px 8px) top / 100% 1px no-repeat,
    repeating-linear-gradient(90deg, #000 0 4px, #ff0 4px 8px) bottom / 100% 1px no-repeat,
    repeating-linear-gradient(#000 0 4px, #ff0 4px 8px) left / 1px 100% no-repeat,
    repeating-linear-gradient(#000 0 4px, #ff0 4px 8px) right / 1px 100% no-repeat,
    #fff;
}
.inner { height: 100%; border: 2px solid #000; }
.vscroll { grid-area: 2 / 4; background: #202020; padding: 1px; }
.vscroll i, .hscroll i { height: 100%; background: #5a5a5a; border-radius: 2px; }
.qmask { grid-area: 3 / 1; padding: 2px 0 0 5px; }
.qmask i { width: 11px; height: 11px; background: #777; border: 1px dashed #aaa; }
.hscroll { grid-area: 3 / 3; background: #202020; padding: 1px 1px 1px 2px; }
.nav { grid-area: 3 / 4; padding-left: 3px; }
.status { grid-area: 4 / 1 / 5 / 6; display: flex; align-items: center; gap: 1px; padding: 0 0 1px 74px; }
.status .unit { width: 47px; }
.unit select { text-align-last: left; }
.zoomval { width: 28px; height: 24px; padding: 0 1px; background: #1f1f1f; font-size: 10px; }
.status .zbtn { padding: 0 2px; width: 18px; height: 26px; justify-content: center; }
.status span { font: 12px/16px Lato, "Open Sans", sans-serif; margin-left: 1px; }

.right { width: 203px; flex: none; display: flex; flex-direction: column; border-left: 1px solid #5c5c5c; }
.rtabs { height: 23px; }
.rtabs .coll { margin-bottom: 1px; }
.gpanel { height: 431px; flex: none; padding: 4px 4px 0 3px; background: #3c3c3c; border-bottom: 1px solid #5c5c5c; display: flex; flex-direction: column; }
.entry { height: 19px; margin-bottom: 2px; padding: 0 2px; background: #1f1f1f; border: 1px solid #2b2b2b; }
.gview { height: 295px; background: linear-gradient(90deg, #000, #808080 38%, #fff); }
.gslide { width: 100%; height: 14px; }
.gscroll { height: 15px; margin: 2px 0; background: #5a5a5a; border: 1px solid #202020; border-radius: 2px; }
.swatch { width: 16px; height: 50px; background: #8f8f8f; }
.zooms { flex: 1; display: flex; }
.zooms button { flex: 1; display: grid; place-items: center; color: #c4c4c4; }
.grip { height: 4px; flex: none; display: flex; gap: 3px; justify-content: center; align-items: center; }
.grip i { width: 4px; height: 2px; background: #aaa; }
.ltb { height: 21px; }
.ltb button:not(.coll) { width: auto; padding: 0 3px 0 1px; gap: 1px; }
.lpanel { flex: 1; min-height: 0; padding: 2px 3px 0 2px; background: #3c3c3c; display: flex; flex-direction: column; }
.lpanel .row { gap: 1px; }
.lpanel .row .combo:first-child { width: 154px; }
.lpanel .spin { margin-top: 1px; }
.lpanel .arrows { border-left: 1px solid #111; }
.lock { height: 25px; flex: none; display: flex; align-items: center; gap: 12px; }
.lock span { margin-right: -6px; }
.lock button { color: #c4c4c4; }
.list { flex: 1; background: #303030; }
.layer { height: 41px; background: #1f1f1f; display: flex; align-items: center; padding-left: 5px; color: #c4c4c4; }
.lthumb { width: 28px; height: 36px; margin: 0 4px 0 51px; padding: 4px; background: #fff; }
.lthumb b { display: block; height: 28px; border: 1px solid #eee; }
.layer strong { font: bold 11px/14px "Noto Sans", sans-serif; color: #eee; }
.lact { height: 28px; flex: none; display: flex; padding: 0 2px 2px 0; }
.lact button { width: 24px; display: grid; place-items: center; }
.lact button:last-child { margin-left: auto; }
</style>
